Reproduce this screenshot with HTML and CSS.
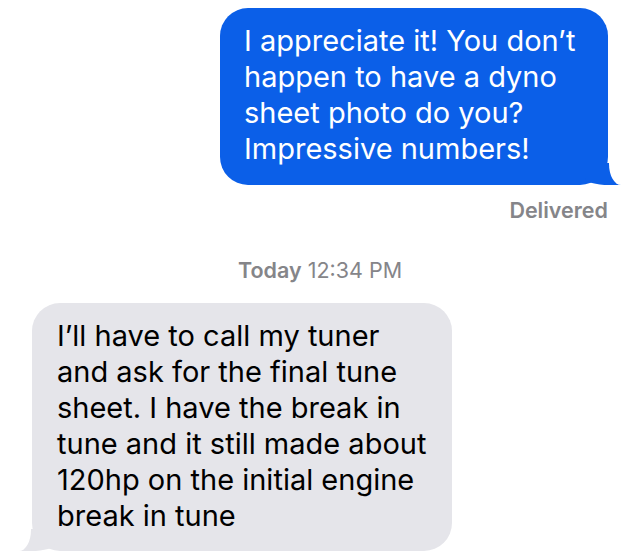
FILE: index.html
```html
<!DOCTYPE html>
<html lang="en">
<head>
    <meta charset="UTF-8">
    <meta name="viewport" content="width=device-width, initial-scale=1.0">
    <title>Messages</title>
    <link rel="stylesheet" href="styles.css">
</head>
<body>
    <div class="thread">
        <div class="bubble sent">I appreciate it! You don’t happen to have a dyno sheet photo do you? Impressive numbers!</div>
        <div class="status">Delivered</div>

        <div class="timestamp"><b>Today</b> 12:34 PM</div>

        <div class="bubble received">I’ll have to call my tuner and ask for the final tune sheet. I have the break in tune and it still made about 120hp on the initial engine break in tune</div>
    </div>
</body>
</html>
```
FILE: styles.css
```css
* {
    margin: 0;
    padding: 0;
    box-sizing: border-box;
}

body {
    font-family: Inter, "Liberation Sans", Arial, sans-serif;
    background: #ffffff;
    width: 640px;
    height: 559px;
    overflow: hidden;
}

.thread {
    display: flex;
    flex-direction: column;
    padding: 8px 32px 0 32px;
}

.bubble {
    position: relative;
    font-size: 29px;
    line-height: 36px;
    border-radius: 28px;
    padding: 15px 24px 18px 24px;
}

.sent {
    align-self: flex-end;
    width: 388px;
    background: #0b5fe8;
    color: #ffffff;
}

.received {
    align-self: flex-start;
    width: 420px;
    margin-top: 20px;
    background: #e5e5ea;
    color: #000000;
    padding-left: 25px;
    padding-bottom: 17px;
}

/* tails */
.bubble::before,
.bubble::after {
    content: "";
    position: absolute;
    bottom: 0;
    height: 22px;
}

.sent::before {
    right: -13px;
    width: 36px;
    background: #0b5fe8;
    border-bottom-left-radius: 24px 7px;
}

.sent::after {
    left: calc(100% + 1px);
    width: 24px;
    background: #ffffff;
    border-bottom-left-radius: 12px 21px;
}

.received::before {
    left: -13px;
    width: 36px;
    background: #e5e5ea;
    border-bottom-right-radius: 24px 7px;
}

.received::after {
    right: calc(100% + 1px);
    width: 24px;
    background: #ffffff;
    border-bottom-right-radius: 12px 21px;
}

.status {
    align-self: flex-end;
    margin-top: 12px;
    font-size: 21.5px;
    font-weight: 600;
    color: #858589;
}

.timestamp {
    align-self: center;
    margin-top: 34px;
    font-size: 21.5px;
    color: #858589;
}

.timestamp b {
    font-weight: 600;
}
```
